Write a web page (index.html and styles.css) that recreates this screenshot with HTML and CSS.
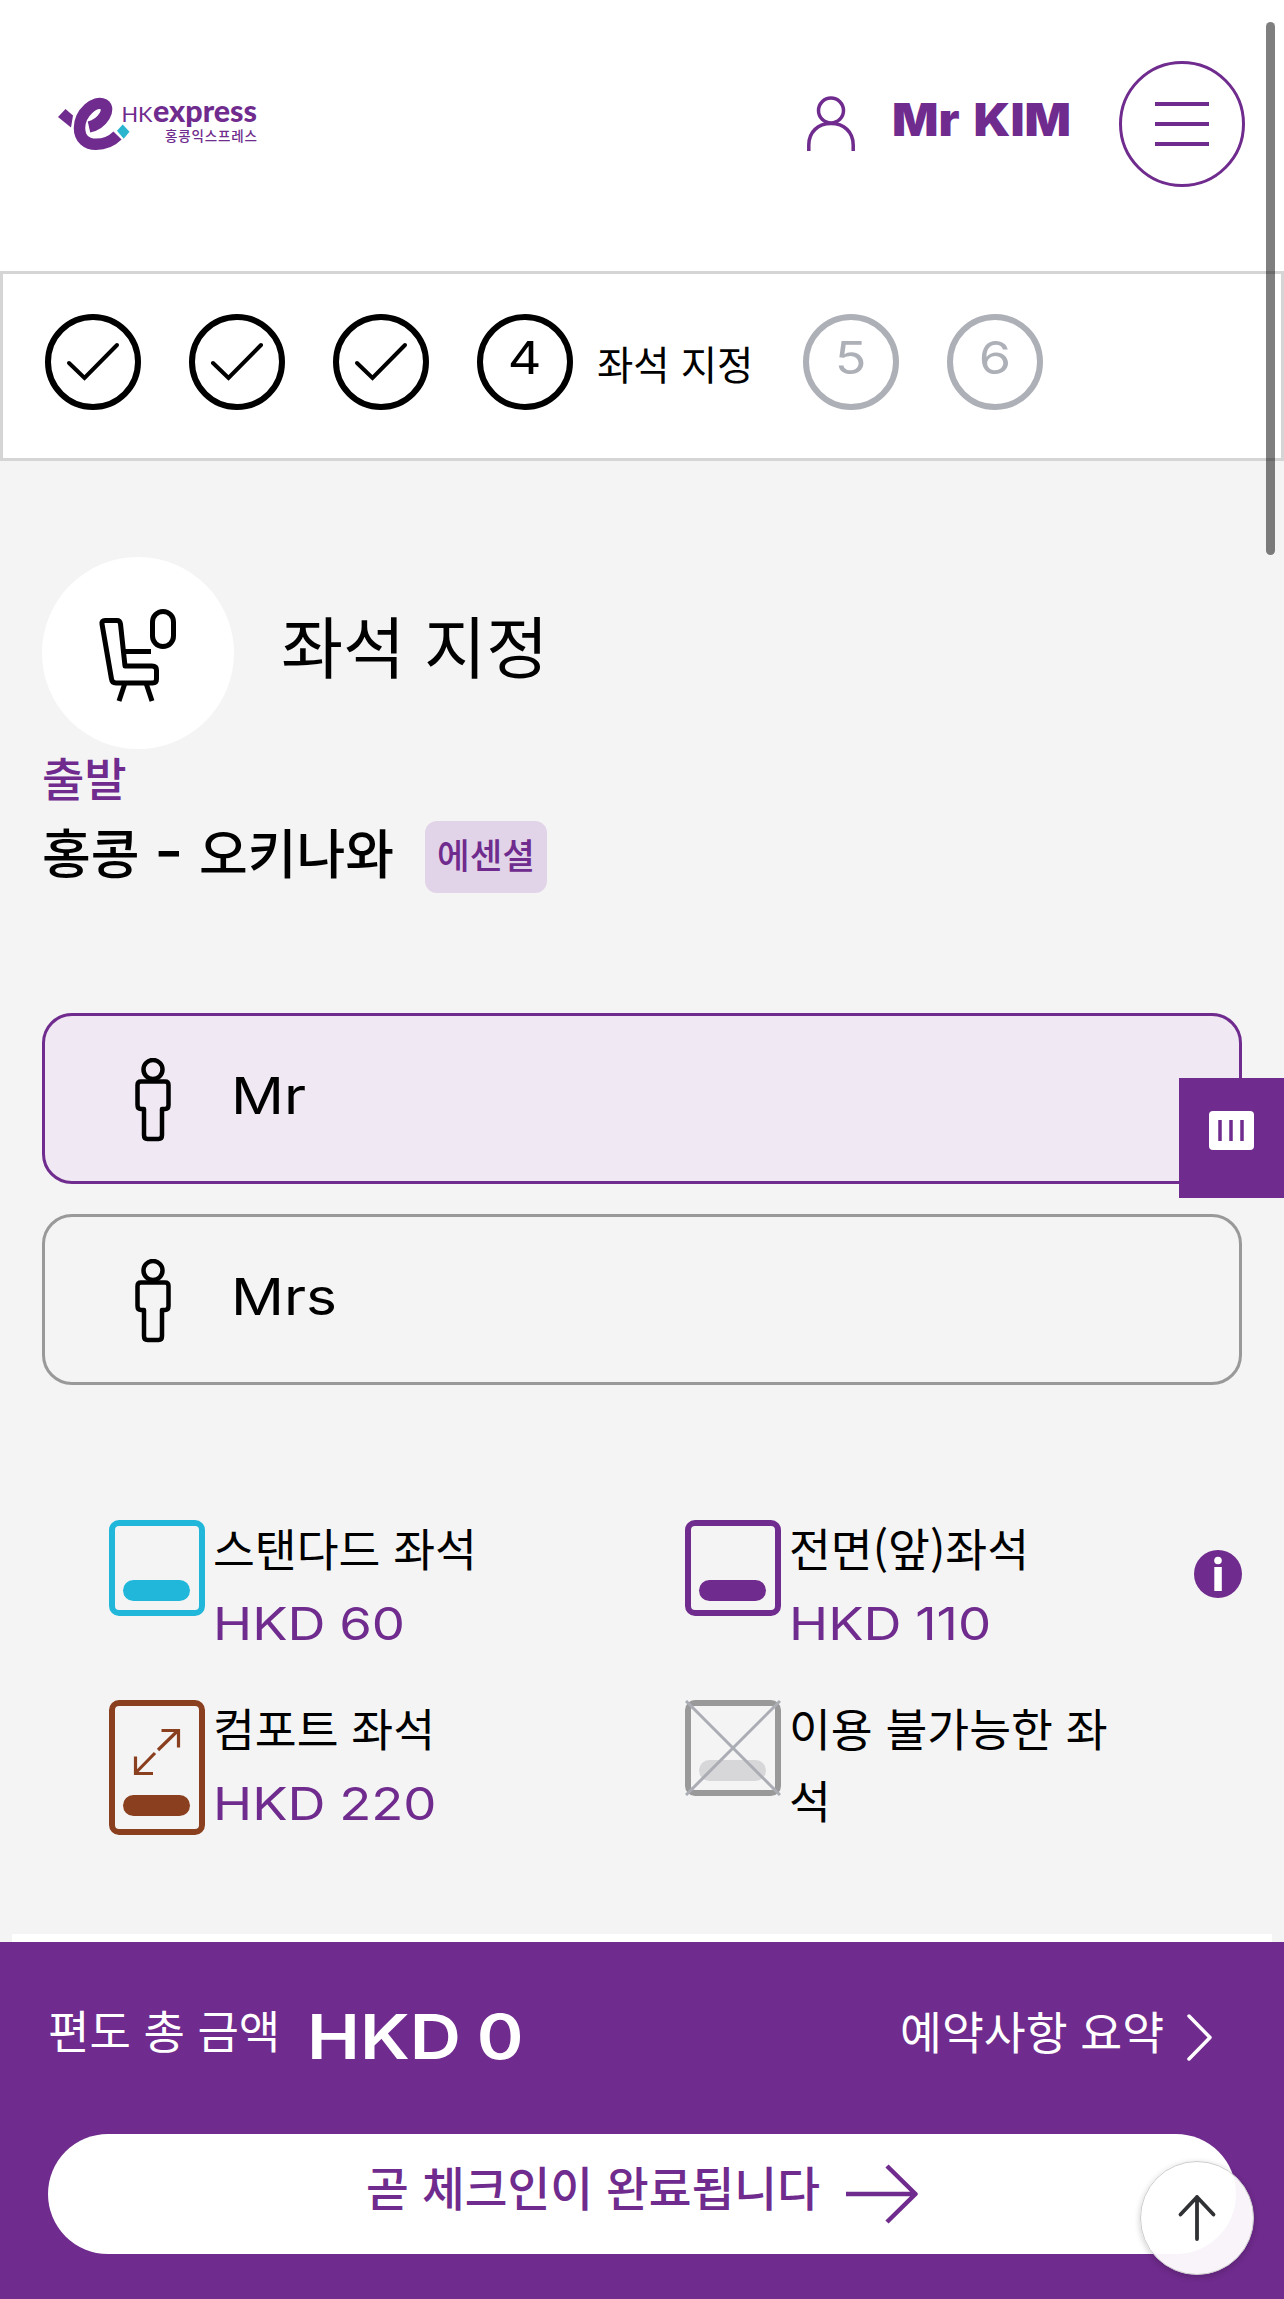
FILE: index.html
```
<!DOCTYPE html>
<html lang="ko">
<head>
  <meta charset="UTF-8" />
  <meta name="viewport" content="width=device-width, initial-scale=1.0"/>
  <title>HK Express - 좌석 지정</title>
  <link rel="stylesheet" href="styles.css">
</head>
<body>
  <header class="header">
    <a href="#" class="logo">
      <svg width="204" height="60" viewBox="56 94 204 60">
        <path d="M89 127C103 124 111 109 104 104.500C95 99.500 79.500 113 79.500 128C79.500 139 87 144.300 96 144.300C105 144.300 112 141 117.500 135.500" fill="none" stroke="#6f2b8d" stroke-width="11.500"/>
        <path d="M58 117L65.500 109L73 115.500L71 127.500Z" fill="#6f2b8d"/>
        <path d="M122.700 124.500L129.500 131.700L123.700 138.800L117 130.700Z" fill="#2bb5cf"/>
        <text class="logo-hk" x="121.500" y="122" textLength="31" lengthAdjust="spacingAndGlyphs">HK</text>
        <text class="logo-express" x="153" y="122" textLength="104" lengthAdjust="spacingAndGlyphs">express</text>
        <text class="logo-ko" x="165" y="141" textLength="92">홍콩익스프레스</text>
      </svg>
    </a>
    <div class="account">
      <svg class="user-icon" width="50" height="56" viewBox="0 0 50 56" fill="none" stroke="#6f2b8d" stroke-width="3.500">
        <circle cx="25" cy="14.500" r="12.500"/>
        <path d="M2.800 55V49C2.800 36 12 27.500 25 27.500S47.200 36 47.200 49V55"/>
      </svg>
      <span class="user-name"><span class="wide">Mr KIM</span></span>
    </div>
    <button class="menu-btn">
      <span></span>
      <span></span>
      <span></span>
    </button>
  </header>

  <nav class="steps">
    <div class="step"><svg width="54" height="40" viewBox="0 0 54 40"><path d="M3 21L18.500 36L51 3"/></svg></div>
    <div class="step"><svg width="54" height="40" viewBox="0 0 54 40"><path d="M3 21L18.500 36L51 3"/></svg></div>
    <div class="step"><svg width="54" height="40" viewBox="0 0 54 40"><path d="M3 21L18.500 36L51 3"/></svg></div>
    <div class="step"><span>4</span></div>
    <div class="step-label">좌석 지정</div>
    <div class="step next"><span>5</span></div>
    <div class="step next"><span>6</span></div>
  </nav>

  <main>
    <div class="title">
      <div class="title-icon">
        <svg width="80" height="96" viewBox="0 0 80 96" fill="none" stroke="#000" stroke-width="5" stroke-linejoin="round">
          <path d="M3 16Q2.500 12.500 6 12.500H18Q21 12.500 21.500 16L26 58H53Q57.500 58 57.500 62V71Q57.500 75 53.500 75H17Q13 75 12.500 71Z"/>
          <path d="M24 43.500H52"/>
          <rect x="53.500" y="3.500" width="21" height="35" rx="10.500"/>
          <path d="M26 75L20 93M47 75L53 93"/>
        </svg>
      </div>
      <h1>좌석 지정</h1>
    </div>

    <p class="direction">출발</p>
    <div class="route">
      <span class="cities">홍콩 <span class="dash">-</span> 오키나와</span>
      <span class="fare">에센셜</span>
    </div>

    <div class="passengers">
      <div class="passenger active">
        <svg width="36" height="84" viewBox="0 0 36 84" fill="none" stroke="#000" stroke-width="4.500" stroke-linejoin="round">
          <circle cx="18" cy="11.500" r="9.500"/>
          <path d="M6 23.500H30Q33.500 23.500 33.500 27V47Q33.500 51 30 51H27V77Q27 81 23.500 81H12.500Q9 81 9 77V51H6Q2.500 51 2.500 47V27Q2.500 23.500 6 23.500Z"/>
        </svg>
        <span class="name">Mr</span>
      </div>
      <div class="passenger">
        <svg width="36" height="84" viewBox="0 0 36 84" fill="none" stroke="#000" stroke-width="4.500" stroke-linejoin="round">
          <circle cx="18" cy="11.500" r="9.500"/>
          <path d="M6 23.500H30Q33.500 23.500 33.500 27V47Q33.500 51 30 51H27V77Q27 81 23.500 81H12.500Q9 81 9 77V51H6Q2.500 51 2.500 47V27Q2.500 23.500 6 23.500Z"/>
        </svg>
        <span class="name">Mrs</span>
      </div>
    </div>

    <div class="legend">
      <div class="legend-item">
        <div class="seat standard"></div>
        <div class="legend-text">
          <p>스탠다드 좌석</p>
          <p class="price">HKD 60</p>
        </div>
      </div>
      <div class="legend-item">
        <div class="seat front"></div>
        <div class="legend-text">
          <p>전면(앞)좌석</p>
          <p class="price">HKD 110</p>
        </div>
        <svg class="info" width="48" height="48" viewBox="0 0 48 48">
          <circle cx="24" cy="24" r="24" fill="#6f2b8d"/>
          <circle cx="24" cy="10.500" r="3.800" fill="#fff"/>
          <rect x="20.300" y="17" width="7.500" height="24" fill="#fff"/>
        </svg>
      </div>
      <div class="legend-item">
        <div class="seat comfort">
          <svg width="48" height="48" viewBox="0 0 48 48" fill="none" stroke="#8a3f1e" stroke-width="3.200">
            <path d="M25 22L45 2.500M28.500 2.500H45.500V19.500M22 25L2.500 45M2.500 28.500V45.500H20"/>
          </svg>
        </div>
        <div class="legend-text">
          <p>컴포트 좌석</p>
          <p class="price">HKD 220</p>
        </div>
      </div>
      <div class="legend-item">
        <div class="seat unavailable">
          <svg width="96" height="96" viewBox="0 0 96 96" stroke="#aaadb4" stroke-width="3">
            <path d="M1 1L95 95M95 1L1 95"/>
          </svg>
        </div>
        <div class="legend-text">
          <p>이용 불가능한 좌석</p>
        </div>
      </div>
    </div>
    <div class="seat-map-top"></div>
  </main>

  <footer>
    <div class="total">
      <span class="total-label">편도 총 금액</span>
      <span class="amount">HKD 0</span>
      <a href="#" class="summary">예약사항 요약
        <svg width="26" height="48" viewBox="0 0 26 48" fill="none" stroke="#fff" stroke-width="3.500" stroke-linecap="round" stroke-linejoin="round">
          <path d="M3 3L24 24.500L3 46"/>
        </svg>
      </a>
    </div>
    <button class="checkin-btn">
      <span>곧 체크인이 완료됩니다</span>
      <svg width="72" height="60" viewBox="0 0 72 60" fill="none" stroke="#6f2b8d" stroke-width="4.500" stroke-linejoin="round">
        <path d="M0 30H69M41 2L69.500 30L41 58"/>
      </svg>
    </button>
  </footer>

  <!-- floating controls -->
  <div class="side-tab">
    <svg width="45" height="39" viewBox="0 0 45 39">
      <rect width="45" height="39" rx="4" fill="#fff"/>
      <path d="M11 9V30M22 9V30M33 9V30" stroke="#6f2b8d" stroke-width="3.500"/>
    </svg>
  </div>
  <button class="to-top">
    <svg width="40" height="48" viewBox="0 0 40 48" fill="none" stroke="#303134" stroke-width="3.800" stroke-linecap="round" stroke-linejoin="round">
      <path d="M20 45V3M3.500 20.500L20 3L36.500 20.500"/>
    </svg>
  </button>
  <div class="scrollbar"></div>
</body>
</html>
```
FILE: styles.css
```
* {
  box-sizing: border-box;
  margin: 0;
  padding: 0;
}

body {
  height: 2299px;
  overflow: hidden;
  display: flex;
  flex-direction: column;
  background: #f4f4f4;
  color: #000;
  font-family: 'Noto Sans CJK KR', sans-serif;
  font-size: 45.500px;
}

button {
  border: none;
  cursor: pointer;
  font-family: inherit;
}

svg {
  display: block;
  flex-shrink: 0;
}

a {
  text-decoration: none;
}

/* Latin names and prices use the wider face */
.user-name,
.step,
.name,
.price,
.amount {
  font-family: Inter, sans-serif;
}

/* Header */
.header {
  height: 271px;
  padding: 61px 39px 0 56px;
  background: #fff;
  display: flex;
  align-items: flex-start;
}

.logo {
  margin-top: 33px;
}

.logo svg {
  overflow: visible;
}

.logo-hk {
  font: 400 22px Lato, sans-serif;
  fill: #6f2b8d;
}

.logo-express {
  font: 900 31px Lato, sans-serif;
  fill: #6f2b8d;
}

.logo-ko {
  font: 500 13.500px 'Noto Sans CJK KR', sans-serif;
  fill: #6f2b8d;
}

.account {
  display: flex;
  align-items: center;
  height: 126px;
  margin-left: auto;
}

.user-icon {
  margin-right: 36px;
}

.user-name {
  width: 227px;
  line-height: 60px;
  padding-bottom: 8px;
  font-size: 45px;
  font-weight: 900;
  color: #6f2b8d;
  word-spacing: 4px;
}

.wide {
  display: inline-block;
  transform: scaleX(1.08);
  transform-origin: left;
}

.menu-btn {
  width: 126px;
  height: 126px;
  border: 3px solid #6f2b8d;
  border-radius: 50%;
  background: #fff;
  display: flex;
  flex-direction: column;
  align-items: center;
  justify-content: center;
  gap: 16.500px;
}

.menu-btn span {
  width: 54px;
  height: 3.500px;
  background: #6f2b8d;
}

/* Steps */
.steps {
  height: 190px;
  padding: 0 0 8px 42px;
  background: #fff;
  border: 3px solid #d5d5d5;
  display: flex;
  align-items: center;
}

.step {
  width: 96px;
  height: 96px;
  margin-right: 48px;
  border: 6px solid #000;
  border-radius: 50%;
  display: flex;
  align-items: center;
  justify-content: center;
  flex-shrink: 0;
  font-size: 45px;
  font-weight: 400;
}

.step svg {
  fill: none;
  stroke: #000;
  stroke-width: 4;
  stroke-linecap: round;
}

.step span {
  line-height: 60px;
  padding-bottom: 8px;
  transform: scaleX(1.16);
}

.step-label {
  width: 158px;
  margin-left: -24px;
  margin-right: 48px;
  font-size: 39.500px;
  white-space: nowrap;
}

.step.next {
  border-color: #aeb0b8;
  color: #aeb0b8;
}

/* Content */
main {
  height: 1481px;
  padding: 96px 42px 0;
}

.title {
  display: flex;
  align-items: center;
}

.title-icon {
  width: 192px;
  height: 192px;
  border-radius: 50%;
  background: #fff;
  display: flex;
  align-items: center;
  justify-content: center;
  padding: 6px 0 0 1px;
}

.title h1 {
  margin-left: 47px;
  padding-bottom: 19px;
  font-size: 67.500px;
  font-weight: 400;
  line-height: 80px;
}

.direction {
  height: 69px;
  line-height: 55px;
  color: #6f2b8d;
  font-size: 46px;
  font-weight: 500;
}

.route {
  display: flex;
  align-items: center;
  height: 78px;
}

.cities {
  width: 383px;
  padding-bottom: 13px;
  font-size: 53px;
  font-weight: 500;
  line-height: 64px;
  white-space: nowrap;
}

.dash {
  display: inline-block;
  margin: 0 5px;
  font-weight: 700;
  transform: scaleX(1.4);
}

.fare {
  width: 122px;
  height: 72px;
  border-radius: 12px;
  background: #e1d3e8;
  color: #6f2b8d;
  font-size: 35.500px;
  font-weight: 500;
  line-height: 66px;
  text-align: center;
}

.passengers {
  margin-top: 117px;
  display: flex;
  flex-direction: column;
  gap: 30px;
}

.passenger {
  height: 171px;
  padding-left: 90px;
  border: 3px solid #999;
  border-radius: 30px;
  display: flex;
  align-items: center;
}

.passenger.active {
  border-color: #6f2b8d;
  background: #f0e8f3;
}

.passenger svg {
  margin-top: 2px;
}

.name {
  margin-left: 60px;
  padding-bottom: 5px;
  font-size: 51px;
  font-weight: 400;
  line-height: 60px;
  transform: scaleX(1.15);
  transform-origin: left;
}

/* Seat legend */
.legend {
  display: grid;
  grid-template-columns: 576px 557px;
  grid-auto-rows: 180px;
  margin-top: 135px;
  padding-left: 67px;
}

.legend-item {
  display: flex;
  align-items: flex-start;
}

.seat {
  display: flex;
  flex-direction: column;
  align-items: center;
  justify-content: flex-end;
  flex-shrink: 0;
  width: 96px;
  height: 96px;
  padding: 0 1px 9px 0;
  border: 6px solid;
  border-radius: 10px;
}

.seat::after {
  content: "";
  width: 67px;
  height: 21px;
  border-radius: 10.500px;
  background: currentColor;
}

.standard {
  color: #20b7db;
}

.front {
  color: #6f2b8d;
}

.comfort {
  height: 135px;
  padding-bottom: 13px;
  color: #8a3f1e;
}

.comfort svg {
  margin-bottom: 19px;
}

.unavailable {
  position: relative;
  border-color: #999;
  color: #d7d7da;
}

.unavailable svg {
  position: absolute;
  left: -6px;
  top: -6px;
}

.legend-text {
  width: 340px;
  margin-left: 8px;
  margin-top: -9px;
  line-height: 72px;
  word-break: break-all;
}

.price {
  padding-top: 5px;
  color: #6f2b8d;
  font-size: 45px;
  font-weight: 400;
  white-space: nowrap;
  word-spacing: -1px;
  transform: scaleX(1.17);
  transform-origin: left;
}

.info {
  margin-top: 30px;
  margin-left: auto;
}

/* top edge of the seat map, just above the footer */
.seat-map-top {
  height: 8px;
  margin: 54px -30px 0;
  background: #fff;
}

/* Footer */
footer {
  height: 357px;
  padding: 55px 48px 0;
  background: #6f2b8d;
  color: #fff;
}

.total {
  display: flex;
  align-items: center;
  height: 72px;
}

.total-label {
  width: 259px;
  padding-bottom: 7px;
  font-size: 45px;
  white-space: nowrap;
}

.amount {
  padding-top: 7px;
  font-size: 62px;
  font-weight: 600;
  line-height: 72px;
  word-spacing: -2px;
  transform: scaleX(1.145);
  transform-origin: left;
}

.summary {
  display: flex;
  align-items: center;
  gap: 22px;
  height: 60px;
  margin: 0 24px 7px auto;
  color: #fff;
}

.summary svg {
  margin-top: 15px;
}

.checkin-btn {
  width: 100%;
  height: 120px;
  margin-top: 65px;
  border-radius: 60px;
  background: #fff;
  color: #6f2b8d;
  font-size: 46.500px;
  font-weight: 500;
  display: flex;
  align-items: center;
  justify-content: center;
  gap: 26px;
}

.checkin-btn span {
  padding-bottom: 18px;
}

/* Floating controls */
.side-tab {
  position: fixed;
  right: 0;
  top: 1078px;
  width: 105px;
  height: 120px;
  padding: 33px 30px;
  background: #6f2b8d;
}

.to-top {
  position: fixed;
  right: 30px;
  bottom: 24px;
  width: 114px;
  height: 114px;
  border: 1px solid #ccc;
  border-radius: 50%;
  background: rgba(255, 255, 255, 0.95);
  box-shadow: 0 2px 6px rgba(0, 0, 0, 0.2);
  display: flex;
  align-items: center;
  justify-content: center;
}

.scrollbar {
  position: fixed;
  right: 9px;
  top: 22px;
  width: 9px;
  height: 533px;
  border-radius: 5px;
  background: rgba(0, 0, 0, 0.5);
}
```
